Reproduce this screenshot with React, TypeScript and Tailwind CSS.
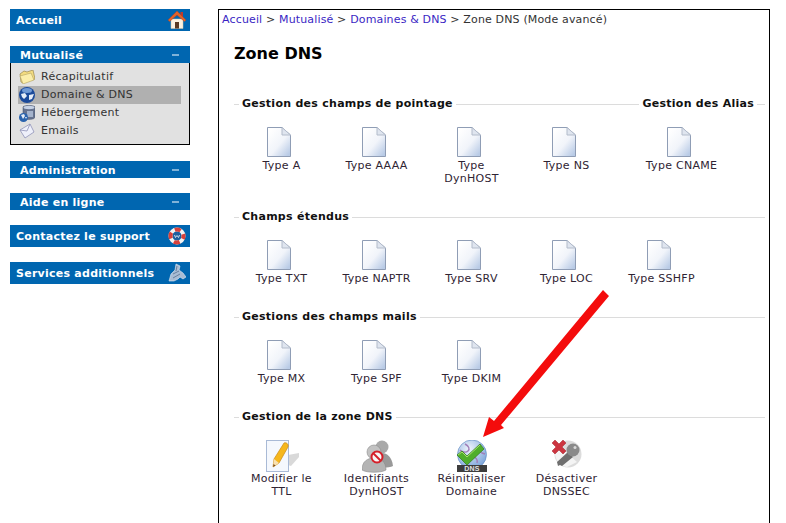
import type { ReactNode } from "react";

function FileIcon() {
  return (
    <svg width="24" height="30" viewBox="0 0 24 30">
      <defs>
        <linearGradient id="fileFill" x1="0.1" y1="0.1" x2="0.9" y2="0.95">
          <stop offset="0" stopColor="#ffffff" />
          <stop offset="0.55" stopColor="#f1f4fa" />
          <stop offset="1" stopColor="#b9cbe6" />
        </linearGradient>
      </defs>
      <path d="M.5.5H15L23.5 8V29.5H.5Z" fill="url(#fileFill)" stroke="#8f9db5" />
      <path d="M15 .5V8H23.5Z" fill="#dfe5ef" stroke="#b3bccb" />
    </svg>
  );
}

function PencilDocIcon() {
  return (
    <svg width="33" height="32" viewBox="0 0 33 32">
      <path d="M22 15l11-2v4l-8 9-3-1z" fill="#d9d9d9" />
      <rect x=".5" y=".5" width="22" height="31" fill="#f5f8fd" stroke="#a9bad6" />
      <path d="M7 27l1-8L18 3c2-1 5 1 4 4L13 23z" fill="#f6b71c" stroke="#c98a18" strokeWidth=".7" />
      <path d="M7 27l1-8 5 4z" fill="#f8e0b0" />
      <path d="M7 27l.5-3 2 1.6z" fill="#7a4a1a" />
    </svg>
  );
}

function UsersBlockedIcon() {
  return (
    <svg width="31" height="33" viewBox="0 0 31 33">
      <circle cx="20" cy="7" r="6.5" fill="#a9a9a9" />
      <path d="M11 26c0-9 4-13 9-13s10 4 11 13c-4 2-16 2-20 0z" fill="#999" />
      <circle cx="12" cy="12" r="7" fill="#c2c2c2" stroke="#8a8a8a" strokeWidth=".6" />
      <path d="M0 30c0-9 6-12 12-12s12 3 12 12c-5 3-19 3-24 0z" fill="#b4b4b4" stroke="#8a8a8a" strokeWidth=".6" />
      <circle cx="15" cy="17" r="5.5" fill="#f7f7f7" stroke="#d5202a" strokeWidth="2" />
      <path d="M11 13l8 8" stroke="#d5202a" strokeWidth="2" />
    </svg>
  );
}

function DnsGlobeIcon() {
  return (
    <svg width="32" height="32" viewBox="0 0 32 32">
      <defs>
        <radialGradient id="dnsGlobe" cx="0.4" cy="0.3" r="0.8">
          <stop offset="0" stopColor="#eef4fc" />
          <stop offset="1" stopColor="#6f9bd6" />
        </radialGradient>
      </defs>
      <circle cx="16" cy="14.5" r="14.5" fill="url(#dnsGlobe)" stroke="#5b86bf" strokeWidth=".6" />
      <path d="M9 4c4 2 5 5 3 7s-6 1-8-1M24 5c-2 3-1 6 2 8l3 1M17 17c3 0 5 3 4 6" fill="none" stroke="#a07fb8" strokeWidth="1.4" />
      <path d="M1 15l5-4 5 5L24 4l4 5-17 16z" fill="#4fae2b" stroke="#2e7a16" strokeWidth=".7" />
      <path d="M2 15l4-3 5 5L24 5" fill="none" stroke="#a9e06d" strokeWidth="1" />
      <rect x="1" y="25" width="30" height="7" fill="#3d3d3d" />
      <text x="16" y="31" textAnchor="middle" fontSize="7" fontWeight="700" fill="#e5e5e5" fontFamily="'Liberation Sans', sans-serif">DNS</text>
    </svg>
  );
}

function KeyOffIcon() {
  return (
    <svg width="30" height="28" viewBox="0 0 30 28">
      <circle cx="16" cy="14" r="13.5" fill="#dcdcdc" />
      <path d="M5 4l20 18-10 5C8 26 3 20 3 13z" fill="#f4f4f4" />
      <path d="M6 26l-1-4 11-10 5 5-11 9-2-1z" fill="#6f6f6f" />
      <circle cx="21" cy="10" r="6.5" fill="#8a8a8a" />
      <circle cx="23" cy="7.5" r="1.5" fill="#d8d8d8" />
      <path d="M0 3l3-3 4 4 4-4 3 3-4 4 4 4-3 3-4-4-4 4-3-3 4-4z" fill="#cc3540" stroke="#a5222b" strokeWidth=".5" />
    </svg>
  );
}

function HomeIcon() {
  return (
    <svg width="18" height="18" viewBox="0 0 18 18">
      <rect x="12.5" y="1" width="2.5" height="5" fill="#c0392b" />
      <path d="M3 8h12v9.5H3z" fill="#fbf1e0" stroke="#d6c4a4" strokeWidth=".5" />
      <path d="M7 11h4v6.5H7z" fill="#5a3a22" />
      <path d="M9 0L0 9l1.5 1.5L9 4l7.5 6.5L18 9z" fill="#e2622a" stroke="#b9431b" strokeWidth=".5" />
    </svg>
  );
}

function LifebuoyIcon() {
  return (
    <svg width="18" height="18" viewBox="0 0 18 18">
      <circle cx="9" cy="9" r="6.5" fill="none" stroke="#f3f3f3" strokeWidth="4" />
      <circle cx="9" cy="9" r="6.5" fill="none" stroke="#d8413a" strokeWidth="4" strokeDasharray="6 4.2" strokeDashoffset="3" />
      <circle cx="9" cy="9" r="4" fill="#1f5f9e" />
      <path d="M6.5 8l1 2.5L9 8.5l1.5 2L11.5 8" fill="none" stroke="#dfe8f2" strokeWidth=".9" />
    </svg>
  );
}

function ServicesIcon() {
  return (
    <svg width="18" height="20" viewBox="0 0 18 20">
      <path d="M1 18l2-7 4-4 1-6 4 2-1 4 4 3 3 4-3 2-3-2-2 2-4 2z" fill="#a9bcd4" stroke="#dfe8f2" strokeWidth=".6" />
      <path d="M5 11l6-3M5 15l7-4M9 3l-1 5" stroke="#58708f" strokeWidth=".8" />
    </svg>
  );
}

function FolderIcon() {
  return (
    <svg width="16" height="14" viewBox="0 0 16 14">
      <path d="M1 4l4-3 3 1 6-2 2 9-12 4-2-1z" fill="#f3dc80" stroke="#a3925a" strokeWidth=".8" />
      <path d="M1 6l11-3 3 7-11 4z" fill="#fbeeaa" stroke="#b3a262" strokeWidth=".6" />
    </svg>
  );
}

function GlobeIcon() {
  return (
    <svg width="16" height="16" viewBox="0 0 16 16">
      <circle cx="8" cy="8" r="8" fill="#1b4a9a" />
      <ellipse cx="8" cy="3.5" rx="5" ry="2.5" fill="#86aee4" opacity=".8" />
      <path d="M2 7l4-1 2 3-3 3-2-2zM10 8l5-1-2 5-3 1z" fill="#e6edf7" />
    </svg>
  );
}

function HostingIcon() {
  return (
    <svg width="16" height="17" viewBox="0 0 16 17">
      <path d="M4 2c0-2 12-2 12 0v10c0 2-4 3-12 2z" fill="#66738f" stroke="#3f4c68" strokeWidth=".5" />
      <ellipse cx="10" cy="2.5" rx="5.5" ry="1.7" fill="#c6d2e6" />
      <path d="M8 6h6v6H8z" fill="#a4b3cc" />
      <circle cx="4.5" cy="12.5" r="4.5" fill="#2a63ad" />
      <path d="M2 10l3-1 1 2-2 3zM6 12l2 0-1 2z" fill="#e6edf7" />
    </svg>
  );
}

function MailIcon() {
  return (
    <svg width="16" height="16" viewBox="0 0 16 16">
      <path d="M1 7L11 1l4 8-9 6z" fill="#eef0fa" stroke="#8f93b8" strokeWidth=".8" />
      <path d="M1 7l7 1 3-7" fill="none" stroke="#8f93b8" strokeWidth=".8" />
    </svg>
  );
}

function BarButton({ label, icon, bar = false }: { label: string; icon?: ReactNode; bar?: boolean }) {
  // two header styles in the side menu: tall link bars and short collapsible ones
  if (bar) {
    return (
      <div className="flex h-[17px] items-center justify-between bg-[#0066b0] pl-[10px] pr-[11px] text-[11px] leading-[15px] font-bold tracking-[0.25px] text-white">
        <span className="pt-[2px]">{label}</span>
        <span className="h-[2px] w-[7px] bg-[#7fb2d8]" />
      </div>
    );
  }
  return (
    <div className="flex h-[22px] items-center justify-between bg-[#0066b0] pl-[6px] pr-[4px] text-[11px] leading-[15px] font-bold tracking-[0.25px] text-white">
      <span>{label}</span>
      {icon}
    </div>
  );
}

function MenuRow({ icon, label, active = false }: { icon: ReactNode; label: string; active?: boolean }) {
  return (
    <div className={`flex h-[18px] items-center gap-[6px] pl-[1px] text-[11px] tracking-[0.25px] text-[#333] ${active ? "bg-[#b0b0b0]" : ""}`}>
      <span className="flex w-[16px] justify-center">{icon}</span>
      <span>{label}</span>
    </div>
  );
}

function Item({ icon, label }: { icon?: ReactNode; label: ReactNode }) {
  return (
    <div className="flex w-[95px] flex-col items-center text-center text-[11px] leading-[13px] tracking-[0.27px] text-[#2f2433]">
      {icon ? (
        <div className="flex h-[30px] items-start pl-[1px]">{icon}</div>
      ) : (
        <div className="flex h-[30px] items-start pr-[5px]">
          <FileIcon />
        </div>
      )}
      <div className="mt-[2px]">{label}</div>
    </div>
  );
}

function Heading({ children }: { children: ReactNode }) {
  return (
    <div className="flex h-[14px] items-center gap-[3px] text-[11px] font-bold tracking-[0.27px] whitespace-nowrap text-[#111]">
      <span className="h-px w-[5px] bg-[#dcdcdc]" />
      <span>{children}</span>
      <span className="h-px flex-1 bg-[#dcdcdc]" />
    </div>
  );
}

function Section({ title, children }: { title: string; children: ReactNode }) {
  return (
    <section className="mb-[25px]">
      <Heading>{title}</Heading>
      <div className="mt-[16px] flex">{children}</div>
    </section>
  );
}

export default function App() {
  return (
    <div className="relative flex h-[523px] w-[786px] gap-[28px] overflow-hidden bg-white pt-[9px] pl-[10px] font-['DejaVu_Sans',sans-serif]">
      {/* Side menu */}
      <aside className="flex w-[180px] shrink-0 flex-col">
        <BarButton label="Accueil" icon={<HomeIcon />} />
        <div className="mt-[15px]">
          <BarButton label="Mutualisé" bar />
          <div className="border border-t-0 border-black bg-[#e1e1e1] pt-[5px] pr-[8px] pb-[4px] pl-[7px]">
            <MenuRow icon={<FolderIcon />} label="Récapitulatif" />
            <MenuRow icon={<GlobeIcon />} label="Domaine & DNS" active />
            <MenuRow icon={<HostingIcon />} label="Hébergement" />
            <MenuRow icon={<MailIcon />} label="Emails" />
          </div>
        </div>
        <div className="mt-[16px]">
          <BarButton label="Administration" bar />
        </div>
        <div className="mt-[15px]">
          <BarButton label="Aide en ligne" bar />
        </div>
        <div className="mt-[15px]">
          <BarButton label="Contactez le support" icon={<LifebuoyIcon />} />
        </div>
        <div className="mt-[15px]">
          <BarButton label="Services additionnels" icon={<ServicesIcon />} />
        </div>
      </aside>

      {/* Main panel */}
      <main className="h-[514px] w-[552px] shrink-0 border border-b-0 border-black">
        <div className="pt-[3px] pl-[3px] text-[11px] leading-[13px] tracking-[0.15px] whitespace-nowrap text-[#333]">
          <span className="text-[#3a1fc4]">Accueil</span> &gt; <span className="text-[#3a1fc4]">Mutualisé</span> &gt;{" "}
          <span className="text-[#3a1fc4]">Domaines & DNS</span> &gt; Zone DNS (Mode avancé)
        </div>
        <div className="pr-[4px] pl-[15px]">
          <h1 className="mt-[18px] h-[19px] text-[16px] leading-[19px] font-bold text-black">Zone DNS</h1>

          <div className="mt-[34px] flex">
            <section className="mb-[25px] w-[400px] shrink-0">
              <Heading>Gestion des champs de pointage</Heading>
              <div className="mt-[16px] flex">
                <Item label="Type A" />
                <Item label="Type AAAA" />
                <Item label={<>Type<br />DynHOST</>} />
                <Item label="Type NS" />
              </div>
            </section>
            <section className="flex-1">
              <div className="flex h-[14px] items-center gap-[3px] text-[11px] font-bold tracking-[0.27px] whitespace-nowrap text-[#111]">
                <span className="h-px flex-1 bg-[#dcdcdc]" />
                <span>Gestion des Alias</span>
                <span className="h-px w-[8px] bg-[#dcdcdc]" />
              </div>
              <div className="mt-[16px] flex">
                <Item label="Type CNAME" />
              </div>
            </section>
          </div>

          <Section title="Champs étendus">
            <Item label="Type TXT" />
            <Item label="Type NAPTR" />
            <Item label="Type SRV" />
            <Item label="Type LOC" />
            <Item label="Type SSHFP" />
          </Section>

          <Section title="Gestions des champs mails">
            <Item label="Type MX" />
            <Item label="Type SPF" />
            <Item label="Type DKIM" />
          </Section>

          <Section title="Gestion de la zone DNS">
            <Item icon={<PencilDocIcon />} label={<>Modifier le<br />TTL</>} />
            <Item icon={<UsersBlockedIcon />} label={<>Identifiants<br />DynHOST</>} />
            <Item icon={<DnsGlobeIcon />} label={<>Réinitialiser<br />Domaine</>} />
            <Item icon={<KeyOffIcon />} label={<>Désactiver<br />DNSSEC</>} />
          </Section>
        </div>
      </main>

      {/* Red annotation arrow */}
      <svg className="absolute top-0 left-0" width="786" height="523" viewBox="0 0 786 523">
        <path d="M603 290L609 296L501 425L504 428L483 437L489 417L494 421Z" fill="#f40c0c" />
      </svg>
    </div>
  );
}
